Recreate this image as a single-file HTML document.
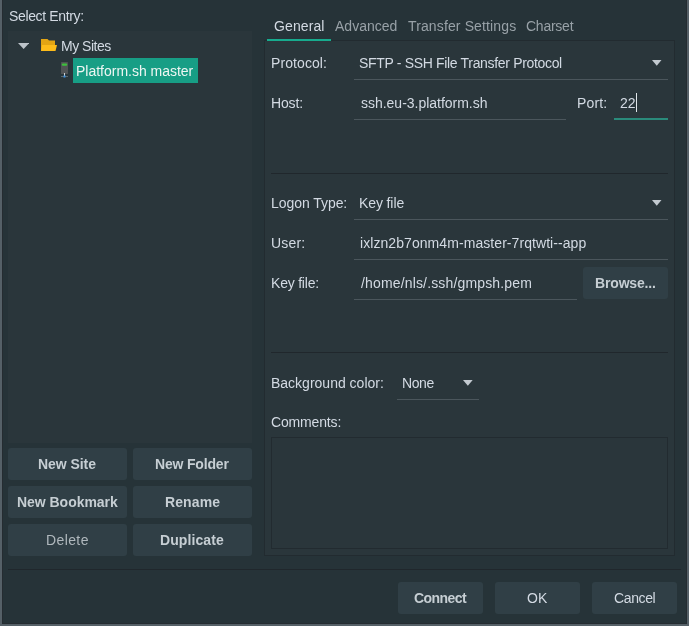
<!DOCTYPE html>
<html><head><meta charset="utf-8"><style>
html,body{margin:0;padding:0;width:689px;height:626px;overflow:hidden;background:#263338;}
.t{position:absolute;will-change:transform;white-space:nowrap;font-family:"Liberation Sans",sans-serif;font-size:14px;line-height:16px;}
</style></head><body>
<div style="position:absolute;left:0px;top:0px;width:2px;height:626px;background:#556067;"></div>
<div style="position:absolute;left:687px;top:0px;width:2px;height:626px;background:#556067;"></div>
<div style="position:absolute;left:0px;top:624px;width:689px;height:2px;background:#556067;"></div>
<div style="position:absolute;left:2px;top:0px;width:1px;height:624px;background:#252c31;"></div>
<div style="position:absolute;left:686px;top:0px;width:1px;height:624px;background:#252c31;"></div>
<div style="position:absolute;left:2px;top:623px;width:685px;height:1px;background:#252c31;"></div>
<div style="position:absolute;left:8px;top:31px;width:244px;height:412px;background:#2a363b;"></div>
<div style="position:absolute;left:73px;top:58px;width:125px;height:25px;background:#179e85;"></div>
<svg style="position:absolute;left:17.9px;top:42.9px" width="11.2" height="6"><path d="M0 0H11.2L5.6 6Z" fill="#bcc3c9"/></svg>
<svg style="position:absolute;left:40px;top:38px" width="18" height="14"><path d="M1 1H7.5L9 2.5H15V13H1Z" fill="#e3a514"/><path d="M2 7H17L15.5 13H1Z" fill="#fdbc1a"/></svg>
<svg style="position:absolute;left:60px;top:61px" width="10" height="18"><rect x="1" y="1" width="7" height="12" rx="0.5" fill="#505355"/><rect x="1.8" y="2.6" width="5.4" height="2.2" rx="1" fill="#3cbf3c"/><rect x="4" y="12" width="1" height="3" fill="#cfd2d4"/><rect x="1" y="15" width="7" height="1" fill="#5e6a70"/><rect x="3.5" y="14.5" width="2" height="2" fill="#3d8fe0"/></svg>
<div style="position:absolute;left:264px;top:40px;width:411px;height:516px;background:#2a363b;box-sizing:border-box;border:1px solid #222b30;"></div>
<div style="position:absolute;left:267px;top:39px;width:64px;height:2px;background:#17ab8e;"></div>
<div style="position:absolute;left:354px;top:79px;width:314px;height:1px;background:#4b565c;"></div>
<svg style="position:absolute;left:652.3px;top:59.9px" width="9.5" height="5.8"><path d="M0 0H9.5L4.75 5.8Z" fill="#c3cad0"/></svg>
<div style="position:absolute;left:354px;top:119px;width:212px;height:1px;background:#4b565c;"></div>
<div style="position:absolute;left:614px;top:118px;width:54px;height:2px;background:#2a8b7b;"></div>
<div style="position:absolute;left:636px;top:93px;width:1px;height:19px;background:#e0e6ea;"></div>
<div style="position:absolute;left:271px;top:173px;width:397px;height:1px;background:#20272c;"></div>
<div style="position:absolute;left:354px;top:219px;width:314px;height:1px;background:#4b565c;"></div>
<svg style="position:absolute;left:652.3px;top:199.9px" width="9.5" height="5.8"><path d="M0 0H9.5L4.75 5.8Z" fill="#c3cad0"/></svg>
<div style="position:absolute;left:354px;top:259px;width:314px;height:1px;background:#4b565c;"></div>
<div style="position:absolute;left:354px;top:299px;width:223px;height:1px;background:#4b565c;"></div>
<div style="position:absolute;left:583px;top:267px;width:85px;height:32px;background:#303f46;border-radius:3px;"></div>
<div style="position:absolute;left:271px;top:352px;width:397px;height:1px;background:#20272c;"></div>
<div style="position:absolute;left:397px;top:399px;width:82px;height:1px;background:#4b565c;"></div>
<svg style="position:absolute;left:463.0px;top:379.9px" width="9.7" height="5.8"><path d="M0 0H9.7L4.85 5.8Z" fill="#c3cad0"/></svg>
<div style="position:absolute;left:271px;top:437px;width:397px;height:112px;background:#2a363b;box-sizing:border-box;border:1px solid #222b30;"></div>
<div style="position:absolute;left:8px;top:448px;width:119px;height:32px;background:#303f46;border-radius:3px;"></div>
<div style="position:absolute;left:8px;top:486px;width:119px;height:32px;background:#303f46;border-radius:3px;"></div>
<div style="position:absolute;left:8px;top:524px;width:119px;height:32px;background:#303f46;border-radius:3px;"></div>
<div style="position:absolute;left:133px;top:448px;width:119px;height:32px;background:#303f46;border-radius:3px;"></div>
<div style="position:absolute;left:133px;top:486px;width:119px;height:32px;background:#303f46;border-radius:3px;"></div>
<div style="position:absolute;left:133px;top:524px;width:119px;height:32px;background:#303f46;border-radius:3px;"></div>
<div style="position:absolute;left:8px;top:569px;width:673px;height:1px;background:#20272c;"></div>
<div style="position:absolute;left:398px;top:582px;width:85px;height:32px;background:#303f46;border-radius:3px;"></div>
<div style="position:absolute;left:495px;top:582px;width:85px;height:32px;background:#303f46;border-radius:3px;"></div>
<div style="position:absolute;left:592px;top:582px;width:85px;height:32px;background:#303f46;border-radius:3px;"></div>
<div class="t" style="left:8.60px;top:8.00px;color:#d3dae3;letter-spacing:-0.362px;">Select Entry:</div>
<div class="t" style="left:60.70px;top:38.00px;color:#d3dae3;letter-spacing:-0.486px;">My Sites</div>
<div class="t" style="left:76.20px;top:63.00px;color:#eef6f3;letter-spacing:-0.012px;">Platform.sh master</div>
<div class="t" style="left:273.60px;top:18.00px;color:#d3dae3;letter-spacing:0.107px;">General</div>
<div class="t" style="left:335.28px;top:18.00px;color:#98a1a7;letter-spacing:0.010px;">Advanced</div>
<div class="t" style="left:408.28px;top:18.00px;color:#98a1a7;letter-spacing:0.129px;">Transfer Settings</div>
<div class="t" style="left:526.44px;top:18.00px;color:#98a1a7;letter-spacing:-0.246px;">Charset</div>
<div class="t" style="left:271.08px;top:55.00px;color:#d3dae3;letter-spacing:0.089px;">Protocol:</div>
<div class="t" style="left:359.00px;top:55.00px;color:#d3dae3;letter-spacing:-0.328px;">SFTP - SSH File Transfer Protocol</div>
<div class="t" style="left:271.08px;top:95.00px;color:#d3dae3;letter-spacing:-0.145px;">Host:</div>
<div class="t" style="left:360.60px;top:95.00px;color:#d3dae3;letter-spacing:-0.020px;">ssh.eu-3.platform.sh</div>
<div class="t" style="left:576.68px;top:95.00px;color:#d3dae3;letter-spacing:0.142px;">Port:</div>
<div class="t" style="left:619.74px;top:95.00px;color:#d3dae3;letter-spacing:0.050px;">22</div>
<div class="t" style="left:270.80px;top:195.00px;color:#d3dae3;letter-spacing:-0.056px;">Logon Type:</div>
<div class="t" style="left:359.08px;top:195.00px;color:#d3dae3;letter-spacing:-0.106px;">Key file</div>
<div class="t" style="left:270.80px;top:235.00px;color:#d3dae3;letter-spacing:0.197px;">User:</div>
<div class="t" style="left:360.08px;top:235.00px;color:#d3dae3;letter-spacing:0.068px;">ixlzn2b7onm4m-master-7rqtwti--app</div>
<div class="t" style="left:270.80px;top:275.00px;color:#d3dae3;letter-spacing:-0.210px;">Key file:</div>
<div class="t" style="left:360.56px;top:275.00px;color:#d3dae3;letter-spacing:0.156px;">/home/nls/.ssh/gmpsh.pem</div>
<div class="t" style="left:594.80px;top:275.00px;color:#c6ced3;font-weight:bold;letter-spacing:-0.161px;">Browse...</div>
<div class="t" style="left:271.12px;top:375.00px;color:#d3dae3;">Background color:</div>
<div class="t" style="left:401.64px;top:375.00px;color:#d3dae3;letter-spacing:-0.390px;">None</div>
<div class="t" style="left:270.90px;top:414.00px;color:#d3dae3;letter-spacing:-0.159px;">Comments:</div>
<div class="t" style="left:38.08px;top:456.00px;color:#c6ced3;font-weight:bold;letter-spacing:-0.050px;">New Site</div>
<div class="t" style="left:154.80px;top:456.00px;color:#c6ced3;font-weight:bold;letter-spacing:-0.179px;">New Folder</div>
<div class="t" style="left:16.74px;top:494.00px;color:#c6ced3;font-weight:bold;letter-spacing:-0.035px;">New Bookmark</div>
<div class="t" style="left:164.80px;top:494.00px;color:#c6ced3;font-weight:bold;letter-spacing:0.110px;">Rename</div>
<div class="t" style="left:45.80px;top:532.00px;color:#b0b8bd;letter-spacing:0.390px;">Delete</div>
<div class="t" style="left:160.36px;top:532.00px;color:#c6ced3;font-weight:bold;letter-spacing:0.089px;">Duplicate</div>
<div class="t" style="left:413.88px;top:590.00px;color:#c6ced3;font-weight:bold;letter-spacing:-0.560px;">Connect</div>
<div class="t" style="left:527.23px;top:590.00px;color:#d3dae3;">OK</div>
<div class="t" style="left:613.88px;top:590.00px;color:#d3dae3;letter-spacing:-0.376px;">Cancel</div>
</body></html>
